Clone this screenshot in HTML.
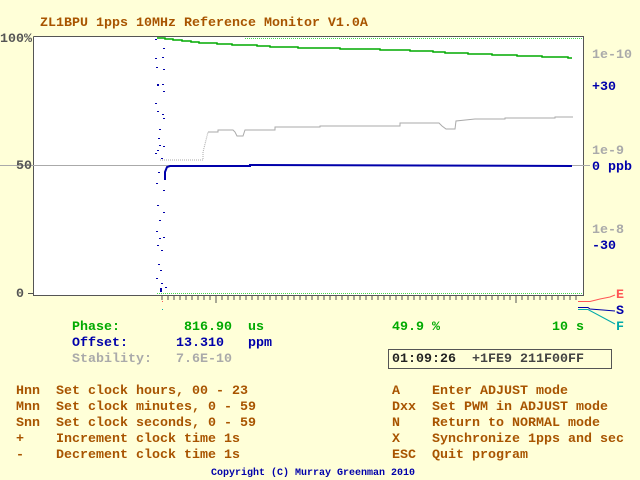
<!DOCTYPE html>
<html><head><meta charset="utf-8"><style>
body{margin:0;width:640px;height:480px;background:#ffffd8;overflow:hidden;position:relative;font-family:"Liberation Mono",monospace;font-weight:bold;font-size:13.33px}
.t{position:absolute;white-space:pre;line-height:16px}
.br{color:#a85400}.g{color:#00aa00}.b{color:#0000aa}.gr{color:#aaaaaa}
</style></head><body>
<svg width="640" height="480" style="position:absolute;left:0;top:0">
<rect x="34" y="37" width="549" height="258" fill="#fff"/>
<path d="M33.5 36.5H583.5V295.5M33.5 36.5V295.5H584" stroke="#555" fill="none"/>
<line x1="0" y1="165.5" x2="590" y2="165.5" stroke="#aaa"/>
<line x1="28" y1="293.5" x2="33" y2="293.5" stroke="#555"/>
<g stroke="#555">
<path d="M162 296v4M168 296v4M174 296v4M180 296v4M186 296v4M192 296v4M198 296v4M204 296v4M210 296v4M216 296v7M222 296v4M228 296v4M234 296v4M240 296v4M246 296v4M252 296v4M258 296v4M264 296v4M270 296v4M276 296v4M282 296v4M288 296v4M294 296v4M300 296v4M306 296v4M312 296v4M318 296v4M324 296v4M330 296v4M336 296v4M342 296v4M348 296v4M354 296v4M360 296v4M366 296v4M372 296v4M378 296v4M384 296v4M390 296v4M396 296v4M402 296v4M408 296v4M414 296v4M420 296v4M426 296v4M432 296v4M438 296v4M444 296v4M450 296v4M456 296v4M462 296v4M468 296v4M474 296v4M480 296v4M486 296v4M492 296v4M498 296v4M504 296v4M510 296v4M516 296v7M522 296v4M528 296v4M534 296v4M540 296v4M546 296v4M552 296v4M558 296v4M564 296v4M570 296v4M576 296v4"/>
</g>
<line x1="245" y1="38.5" x2="582" y2="38.5" stroke="#44dd44" stroke-dasharray="1,1"/>
<line x1="157" y1="293.5" x2="582" y2="293.5" stroke="#44dd44" stroke-dasharray="1,1"/>
<polyline fill="none" stroke="#00aa00" stroke-width="1.5" points="157,38 165,38 165,39 173,39 173,40 182,40 182,41 191,41 191,42 199,42 199,43 217,43 217,44 232,44 232,45 257,45 257,46 270,46 270,47 298,47 298,48 340,48 340,49 380,49 380,50 410,50 410,51 433,51 433,52 445,52 445,53 468,53 468,54 492,54 492,55 517,55 517,56 542,56 542,57 568,57 568,58 572,58"/>
<polyline fill="none" stroke="#aaa" stroke-dasharray="1,1" points="160,160 203,160 203,152 206,140 208,132"/>
<polyline fill="none" stroke="#aaa" points="208,132 218,132 218,130 233,130 235,132 237,136 243,136 245,130 275,130 275,127 320,127 320,126 400,126 400,123 439,123 442,126 446,129 455,129 456,121 475,119 505,119 505,118 555,118 555,117 573,117"/>
<polyline fill="none" stroke="#0000aa" stroke-width="2" points="165,180 165,172 167,167 170,166 250,166 250,165 572,166"/>
<g fill="#0000aa">
<rect x="155" y="39" width="2" height="1"/><rect x="163" y="48" width="2" height="1"/><rect x="155" y="58" width="2" height="1"/><rect x="162" y="57" width="2" height="1"/><rect x="163" y="69" width="2" height="1"/><rect x="156" y="67" width="2" height="1"/><rect x="157" y="84" width="2" height="2"/><rect x="162" y="84" width="2" height="1"/><rect x="163" y="91" width="2" height="1"/><rect x="155" y="103" width="2" height="1"/><rect x="157" y="111" width="2" height="1"/><rect x="162" y="114" width="2" height="1"/><rect x="163" y="118" width="2" height="1"/><rect x="159" y="129" width="2" height="1"/><rect x="158" y="138" width="2" height="1"/><rect x="159" y="145" width="2" height="1"/><rect x="157" y="150" width="2" height="1"/><rect x="163" y="146" width="2" height="1"/><rect x="155" y="153" width="2" height="1"/><rect x="161" y="158" width="2" height="1"/><rect x="158" y="172" width="2" height="1"/><rect x="156" y="183" width="2" height="1"/><rect x="163" y="190" width="2" height="1"/><rect x="157" y="205" width="2" height="1"/><rect x="163" y="212" width="2" height="1"/><rect x="159" y="220" width="2" height="1"/><rect x="156" y="231" width="2" height="1"/><rect x="163" y="237" width="2" height="1"/><rect x="159" y="238" width="2" height="1"/><rect x="157" y="245" width="2" height="1"/><rect x="161" y="250" width="2" height="1"/><rect x="158" y="264" width="2" height="1"/><rect x="160" y="270" width="2" height="1"/><rect x="156" y="278" width="2" height="1"/><rect x="161" y="283" width="2" height="1"/><rect x="160" y="288" width="2" height="4"/><rect x="165" y="287" width="2" height="1"/>
</g>
<rect x="162" y="301" width="1" height="1" fill="#ff5555"/><rect x="162" y="309" width="1" height="1" fill="#00aaaa"/>
<polyline fill="none" stroke="#ff5555" points="578,301.5 590,301.5 600,299 610,297 615,295"/>
<polyline fill="none" stroke="#0000aa" points="578,307.5 588,307.5 590,309 603,310 615,311"/>
<polyline fill="none" stroke="#00aaaa" points="578,309.5 588,309.5 615,324"/>
<rect x="388.5" y="349.5" width="223" height="19" fill="none" stroke="#555"/>
</svg>
<div class="t br" style="left:40px;top:16px">ZL1BPU 1pps 10MHz Reference Monitor V1.0A</div>
<div class="t" style="left:0;top:32px;color:#555">100%</div>
<div class="t" style="left:16px;top:159px;color:#555">50</div>
<div class="t" style="left:16px;top:287px;color:#555">0</div>
<div class="t gr" style="left:592px;top:48px">1e-10</div>
<div class="t b" style="left:592px;top:80px">+30</div>
<div class="t gr" style="left:592px;top:144px">1e-9</div>
<div class="t b" style="left:592px;top:160px">0 ppb</div>
<div class="t gr" style="left:592px;top:223px">1e-8</div>
<div class="t b" style="left:592px;top:239px">-30</div>
<div class="t" style="left:616px;top:288px;color:#ff5555">E</div>
<div class="t b" style="left:616px;top:304px">S</div>
<div class="t" style="left:616px;top:320px;color:#00aaaa">F</div>
<div class="t g" style="left:72px;top:320px">Phase:        816.90  us</div>
<div class="t b" style="left:72px;top:336px">Offset:      13.310   ppm</div>
<div class="t gr" style="left:72px;top:352px">Stability:   7.6E-10</div>
<div class="t g" style="left:392px;top:320px">49.9 %</div>
<div class="t g" style="left:552px;top:320px">10 s</div>
<div class="t" style="left:392px;top:352px;color:#222">01:09:26  <span style="color:#444">+1FE9 211F00FF</span></div>
<div class="t br" style="left:16px;top:384px">Hnn  Set clock hours, 00 - 23
Mnn  Set clock minutes, 0 - 59
Snn  Set clock seconds, 0 - 59
+    Increment clock time 1s
-    Decrement clock time 1s</div>
<div class="t br" style="left:392px;top:384px">A    Enter ADJUST mode
Dxx  Set PWM in ADJUST mode
N    Return to NORMAL mode
X    Synchronize 1pps and sec
ESC  Quit program</div>
<div class="t b" style="left:211px;top:468px;font-size:10px;line-height:12px">Copyright (C) Murray Greenman 2010</div>
</body></html>
